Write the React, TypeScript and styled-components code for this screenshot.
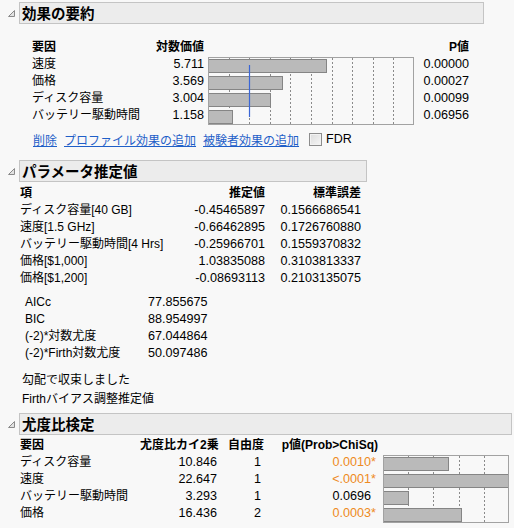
import React from 'react';
import styled, { createGlobalStyle } from 'styled-components';

const Global = createGlobalStyle`
  html, body { margin: 0; padding: 0; background: #f8f8f8; }
  body {
    font-family: "Liberation Sans", "Noto Sans CJK JP", sans-serif;
    font-size: 12px;
    color: #000;
  }
`;

const Page = styled.div`
  width: 514px;
  height: 528px;
  overflow: hidden;
  padding-top: 2px;
  box-sizing: border-box;
`;

const OutlineHeader = styled.div<{ $mt?: number }>`
  display: flex;
  align-items: center;
  height: 22px;
  margin-top: ${p => p.$mt ?? 0}px;
`;

const Disclosure = styled.svg`
  display: block;
  width: 19px;
  height: 22px;
  flex: none;
`;

const TitleBox = styled.div<{ $w: number }>`
  width: ${p => p.$w}px;
  height: 22px;
  box-sizing: border-box;
  border: 1px solid #c4c4c4;
  background: #ececec;
  padding-left: 2px;
  font-family: "Noto Sans CJK JP", sans-serif;
  font-weight: 700;
  font-size: 14.5px;
  line-height: 19px;
  white-space: nowrap;
`;

const Header = ({ title, width, mt }: { title: string; width: number; mt?: number }) => (
  <OutlineHeader $mt={mt}>
    <Disclosure viewBox="0 0 19 22">
      <polygon points="8.5,14.5 14.5,8.5 14.5,14.5" fill="#e2e2e2" stroke="#8a8a8a" strokeWidth="1" />
    </Disclosure>
    <TitleBox $w={width}>{title}</TitleBox>
  </OutlineHeader>
);

/* ---------- generic cells ---------- */

const Cell = styled.div<{ $align?: 'left' | 'right'; $bold?: boolean; $pr?: number; $num?: boolean }>`
  height: 17px;
  line-height: 17px;
  white-space: nowrap;
  text-align: ${p => p.$align ?? 'left'};
  font-weight: ${p => (p.$bold ? 700 : 400)};
  font-size: ${p => (p.$num ? '12.6px' : '12px')};
  padding-right: ${p => p.$pr ?? 0}px;
`;

const ChartSvg = styled.svg`
  display: block;
`;

const ChartCell = styled.div<{ $col: number; $mt: number }>`
  grid-column: ${p => p.$col};
  grid-row: 2 / span 4;
  margin-top: ${p => p.$mt}px;
`;

type ChartProps = {
  width: number;
  height: number;
  ticks: number[];
  bars: number[];
  refX?: number;
};

const BarChart = ({ width, height, ticks, bars, refX }: ChartProps) => (
  <ChartSvg width={width} height={height}>
    {ticks.map(x => (
      <line
        key={x}
        x1={Math.round(x) + 0.5}
        x2={Math.round(x) + 0.5}
        y1={1}
        y2={height - 1}
        stroke="#8a8a8a"
        strokeWidth={1}
        strokeDasharray="2 2"
      />
    ))}
    {bars.map((w, i) => (
      <rect
        key={i}
        x={0.5}
        y={2.5 + 17 * i}
        width={Math.round(w)}
        height={13}
        fill="#bababa"
        stroke="#858585"
        strokeWidth={1}
      />
    ))}
    {refX !== undefined && (
      <line x1={refX + 0.5} x2={refX + 0.5} y1={8} y2={60} stroke="#3a66d6" strokeWidth={1.2} />
    )}
    <rect x={0.5} y={0.5} width={width - 1} height={height - 1} fill="none" stroke="#a2a2a2" />
  </ChartSvg>
);

/* ---------- effect summary ---------- */

const EffectGrid = styled.div`
  display: grid;
  grid-template-columns: 118px 58px 206px 55px;
  grid-auto-rows: 17px;
  margin: 14.5px 0 0 32px;
`;

const effects = [
  { name: '速度', lw: 5.711, p: '0.00000' },
  { name: '価格', lw: 3.569, p: '0.00027' },
  { name: 'ディスク容量', lw: 3.004, p: '0.00099' },
  { name: 'バッテリー駆動時間', lw: 1.158, p: '0.06956' },
];

const LinkRow = styled.div`
  display: flex;
  align-items: center;
  gap: 7px;
  height: 16px;
  margin: 7.5px 0 0 33px;
`;

const Link = styled.a`
  color: #1f5fc8;
  text-decoration: underline;
  cursor: pointer;
  white-space: nowrap;
`;

const CheckLabel = styled.label`
  display: flex;
  align-items: center;
  gap: 4px;
  margin-left: 3px;
  font-size: 12.5px;
`;

const CheckBox = styled.span`
  display: block;
  width: 13px;
  height: 13px;
  box-sizing: border-box;
  border: 1px solid #8c8c8c;
  background: linear-gradient(135deg, #dcdcdc, #f6f6f6);
  box-shadow: inset 0 0 0 1px #f2f2f2;
`;

/* ---------- parameter estimates ---------- */

const ParamGrid = styled.div`
  display: grid;
  grid-template-columns: 170px 75px 96px;
  margin: 2.5px 0 0 20px;
`;

const params = [
  ['ディスク容量[40 GB]', '-0.45465897', '0.1566686541'],
  ['速度[1.5 GHz]', '-0.66462895', '0.1726760880'],
  ['バッテリー駆動時間[4 Hrs]', '-0.25966701', '0.1559370832'],
  ['価格[$1,000]', '1.03835088', '0.3103813337'],
  ['価格[$1,200]', '-0.08693113', '0.2103135075'],
];

const StatsGrid = styled.div`
  display: grid;
  grid-template-columns: 123px auto;
  margin: 7.3px 0 0 25px;
`;

const stats = [
  ['AICc', '77.855675'],
  ['BIC', '88.954997'],
  ['(-2)*対数尤度', '67.044864'],
  ['(-2)*Firth対数尤度', '50.097486'],
];

const Messages = styled.div`
  margin: 9.4px 0 0 22px;
`;

const Message = styled.div`
  height: 19px;
  line-height: 19px;
  white-space: nowrap;
`;

/* ---------- likelihood ratio ---------- */

const LRGrid = styled.div`
  display: grid;
  grid-template-columns: 120px 77px 47px 114px 131px;
  grid-template-rows: 18px repeat(4, 17px);
  margin: 1.5px 0 0 20px;
`;

const HeadCell = styled(Cell)`
  height: 18px;
  line-height: 18px;
`;

const PVal = styled.div<{ $sig: boolean }>`
  height: 17px;
  line-height: 17px;
  font-size: 12.6px;
  text-align: right;
  white-space: nowrap;
  color: ${p => (p.$sig ? '#ee8a22' : '#000')};
`;

const Star = styled.span<{ $show: boolean }>`
  display: inline-block;
  width: 7px;
  text-align: left;
  visibility: ${p => (p.$show ? 'visible' : 'hidden')};
`;

const LRChartWrap = styled.div`
  margin-left: 5px;
`;

const lr = [
  { name: 'ディスク容量', chi: '10.846', df: '1', p: '0.0010', sig: true, bar: 65 },
  { name: '速度', chi: '22.647', df: '1', p: '<.0001', sig: true, bar: 125 },
  { name: 'バッテリー駆動時間', chi: '3.293', df: '1', p: '0.0696', sig: false, bar: 25 },
  { name: '価格', chi: '16.436', df: '2', p: '0.0003', sig: true, bar: 78 },
];

export default function App() {
  const effTicks = Array.from({ length: 9 }, (_, i) => 20.6 * (i + 1));
  const lrTicks = Array.from({ length: 4 }, (_, i) => 25.2 * (i + 1));
  return (
    <Page>
      <Global />
      <Header title="効果の要約" width={465} />
      <EffectGrid>
        <Cell $bold>要因</Cell>
        <Cell $bold $align="right" $pr={4}>対数価値</Cell>
        <Cell />
        <Cell $bold $align="right">P値</Cell>
        {effects.map((e, i) => (
          <React.Fragment key={e.name}>
            <Cell style={{ gridRow: i + 2, gridColumn: 1 }}>{e.name}</Cell>
            <Cell style={{ gridRow: i + 2, gridColumn: 2 }} $align="right" $pr={4} $num>{e.lw.toFixed(3)}</Cell>
            <Cell style={{ gridRow: i + 2, gridColumn: 4 }} $align="right" $num>{e.p}</Cell>
          </React.Fragment>
        ))}
        <ChartCell $col={3} $mt={1.5}>
          <BarChart width={206} height={68} ticks={effTicks} bars={effects.map(e => e.lw * 20.6)} refX={41} />
        </ChartCell>
      </EffectGrid>
      <LinkRow>
        <Link>削除</Link>
        <Link>プロファイル効果の追加</Link>
        <Link>被験者効果の追加</Link>
        <CheckLabel>
          <CheckBox />
          FDR
        </CheckLabel>
      </LinkRow>

      <Header title="パラメータ推定値" width={348} mt={13} />
      <ParamGrid>
        <Cell $bold>項</Cell>
        <Cell $bold $align="right">推定値</Cell>
        <Cell $bold $align="right">標準誤差</Cell>
        {params.map(r => (
          <React.Fragment key={r[0]}>
            <Cell>{r[0]}</Cell>
            <Cell $align="right" $num>{r[1]}</Cell>
            <Cell $align="right" $num>{r[2]}</Cell>
          </React.Fragment>
        ))}
      </ParamGrid>
      <StatsGrid>
        {stats.map(s => (
          <React.Fragment key={s[0]}>
            <Cell>{s[0]}</Cell>
            <Cell $num>{s[1]}</Cell>
          </React.Fragment>
        ))}
      </StatsGrid>
      <Messages>
        <Message>勾配で収束しました</Message>
        <Message>Firthバイアス調整推定値</Message>
      </Messages>

      <Header title="尤度比検定" width={493} mt={3.8} />
      <LRGrid>
        <HeadCell $bold>要因</HeadCell>
        <HeadCell $bold $align="right">尤度比カイ2乗</HeadCell>
        <HeadCell $bold $align="right">自由度</HeadCell>
        <HeadCell $bold $align="right">p値(Prob&gt;ChiSq)</HeadCell>
        <HeadCell />
        {lr.map((r, i) => (
          <React.Fragment key={r.name}>
            <Cell style={{ gridRow: i + 2, gridColumn: 1 }}>{r.name}</Cell>
            <Cell style={{ gridRow: i + 2, gridColumn: 2 }} $align="right" $num>{r.chi}</Cell>
            <Cell style={{ gridRow: i + 2, gridColumn: 3 }} $align="right" $pr={3} $num>{r.df}</Cell>
            <PVal style={{ gridRow: i + 2, gridColumn: 4 }} $sig={r.sig}>
              {r.p}
              <Star $show={r.sig}>*</Star>
            </PVal>
          </React.Fragment>
        ))}
        <ChartCell $col={5} $mt={1}>
          <LRChartWrap>
            <BarChart width={126} height={68} ticks={lrTicks} bars={lr.map(r => r.bar)} />
          </LRChartWrap>
        </ChartCell>
      </LRGrid>
    </Page>
  );
}
